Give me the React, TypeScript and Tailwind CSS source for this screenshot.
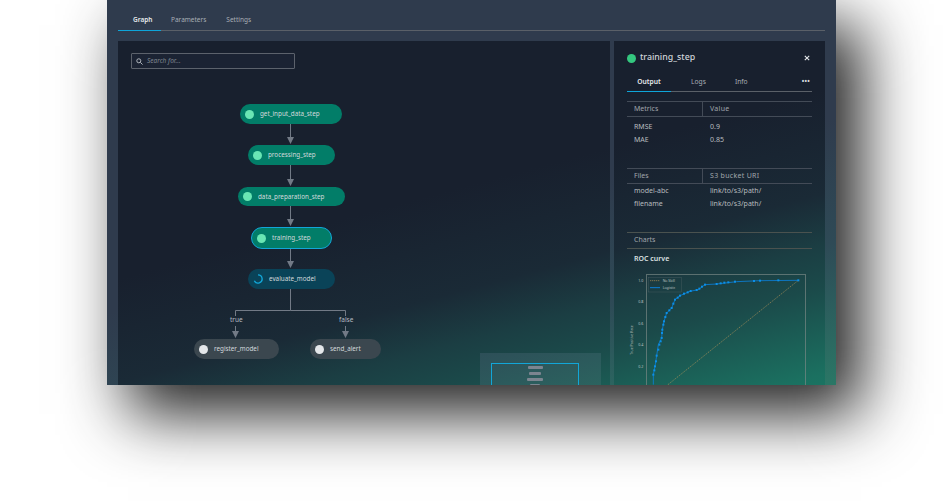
const FONT = "font-['Noto_Sans',sans-serif]"

// both washes are fixed to the page so panels and frame shift to teal along the same line
const FRAME_BG = 'bg-[linear-gradient(165deg,#2f3b4d_330px,#2e4a56_450px,#2c5a5c_500px,#2a7866_590px)] bg-fixed'
const PANEL_BG = 'bg-[linear-gradient(165deg,#18202e_300px,#1a2a36_400px,#1b3e43_450px,#1b4a4a_490px,#1b7060_574px,#1b7462_590px)] bg-fixed'

type Node = { name: string; left: number; top: number; w: number; h: number; kind: 'done' | 'active' | 'running' | 'idle' }

const NODES: Node[] = [
  { name: 'get_input_data_step', left: 122, top: 63, w: 102, h: 20, kind: 'done' },
  { name: 'processing_step', left: 130, top: 104, w: 87, h: 20, kind: 'done' },
  { name: 'data_preparation_step', left: 120, top: 146, w: 107, h: 19, kind: 'done' },
  { name: 'training_step', left: 133, top: 186, w: 81, h: 22, kind: 'active' },
  { name: 'evaluate_model', left: 130, top: 228, w: 87, h: 20, kind: 'running' },
  { name: 'register_model', left: 76, top: 298, w: 85, h: 20, kind: 'idle' },
  { name: 'send_alert', left: 192, top: 298, w: 71, h: 20, kind: 'idle' },
]

const CURVE = '130,495 130,465 135,440 140,408 145,375 155,355 157,330 162,305 170,280 185,265 195,240 210,228 240,215 265,210 285,195 320,193 380,186 450,183 565,182'
const MARKS = '130,465 133,452 135,440 138,425 140,408 145,390 148,375 152,365 155,355 156,340 157,330 160,315 162,305 166,292 170,280 178,272 185,265 190,252 195,240 203,234 210,228 222,222 233,218 242,214 260,211 268,207 276,201 285,195 320,193 332,191 343,189 355,188 375,186 432,184 450,183 505,182 565,182'

function GraphNode({ node }: { node: Node }) {
  const bg =
    node.kind === 'running' ? 'bg-[#0a4358]' : node.kind === 'idle' ? 'bg-[#3b474f]' : 'bg-[#027d68]'
  return (
    <div
      className={`absolute flex items-center rounded-full pl-[5px] ${bg} ${node.kind === 'active' ? 'border border-[#12a6d8]' : ''}`}
      style={{ left: node.left, top: node.top, width: node.w, height: node.h }}
    >
      {node.kind === 'running' ? (
        <svg width="10" height="10" viewBox="0 0 11 11" className="shrink-0">
          <path d="M5.5 1 A4.5 4.5 0 1 1 1.5 7.5" fill="none" stroke="#12a6d8" strokeWidth="1.5" />
        </svg>
      ) : (
        <span className={`size-[9px] shrink-0 rounded-full ${node.kind === 'idle' ? 'bg-[#e4e7ea]' : 'bg-[#69e6b4]'}`} />
      )}
      <span className="ml-[6px] whitespace-nowrap text-[6.3px] text-[#d3d9dc]">{node.name}</span>
    </div>
  )
}

function Edges() {
  return (
    <svg className="absolute left-0 top-0" width="492" height="344" fill="none">
      <g stroke="#727a86" strokeWidth="1">
        <path d="M172.5 83V96M172.5 124V138M172.5 165V178M172.5 208V220M172.5 248V269.5H117.5V275M227.500 269.5V275M172.5 269.5H227.5M117.500 285V290M227.500 285V290" />
      </g>
      <g fill="#727a86">
        <path d="M169 96h7l-3.500 7zM169 138h7l-3.500 7zM169 178h7l-3.500 7zM169 220h7l-3.500 7zM114 290h7l-3.500 7zM224 290h7l-3.500 7z" />
      </g>
    </svg>
  )
}

function TableHead({ a, b }: { a: string; b: string }) {
  return (
    <div className="flex h-4 items-center border-y border-[#434b57] text-[7px] text-[#a0a6ac]">
      <span className="flex h-full w-[76px] items-center border-r border-[#434b57] pl-[7px]">{a}</span>
      <span className="pl-[7px] tracking-[0.3px]">{b}</span>
    </div>
  )
}

function TableRow({ a, b }: { a: string; b: string }) {
  return (
    <div className="flex h-[12.500px] items-center text-[7px] text-[#b7bcbf]">
      <span className="w-[76px] pl-[7px]">{a}</span>
      <span className="pl-[7px]">{b}</span>
    </div>
  )
}

function RocChart() {
  // coordinates follow the source plot at 3x, offset by the chart box
  return (
    <svg width="204" height="125" viewBox="0 0 612 375" fill="none" className="ml-[-13px] mt-[8px] shrink-0">
      <g transform="translate(-12,0)">
      <rect x="109" y="8" width="478" height="400" stroke="#7d8b88" strokeWidth="2" />
      <g transform="translate(0,-157)">
        <polyline points="130,530 565,182" stroke="#c19a5b" strokeWidth="1.800" strokeDasharray="4 3" />
        <polyline points={CURVE} stroke="#0b7fd8" strokeWidth="2.500" strokeLinejoin="round" />
        {MARKS.split(' ').map((p) => {
          const [x, y] = p.split(',')
          return <rect key={p} x={Number(x) - 3} y={Number(y) - 3} width="6" height="6" fill="#0b8fe8" />
        })}
        <g fontSize="11" fill="#b9c2c0" textAnchor="end">
          <text x="100" y="186">1.0</text>
          <text x="100" y="250">0.8</text>
          <text x="100" y="315">0.6</text>
          <text x="100" y="380">0.4</text>
          <text x="100" y="444">0.2</text>
        </g>
        <text x="0" y="0" fontSize="10.500" fill="#a6b1ae" transform="translate(68,405) rotate(-90)">True Positive Rate</text>
        <rect x="116" y="173" width="99" height="44" stroke="#55666a" fill="none" />
        <path d="M120 183H150" stroke="#c19a5b" strokeWidth="1.800" strokeDasharray="4 2" />
        <path d="M120 204H150" stroke="#0b7fd8" strokeWidth="3" />
        <g fontSize="10.500" fill="#b9c2c0">
          <text x="158" y="187">No Skill</text>
          <text x="158" y="208">Logistic</text>
        </g>
      </g>
      </g>
    </svg>
  )
}

export default function App() {
  return (
    <div className={`h-[501px] w-[943px] overflow-hidden bg-white pl-[107px] ${FONT}`}>
      <div className={`relative flex h-[385px] w-[729px] flex-col overflow-hidden shadow-[23px_27px_60px_2px_rgba(0,0,0,0.87)] ${FRAME_BG}`}>
        {/* Tabs */}
        <div className="mx-[11px] mt-[11px] flex h-[20px] w-[707px] shrink-0 border-b border-[#5a6068] text-[6.500px] text-[#a8aeb5]">
          <div className="-mb-px w-[43px] border-b border-[#0ea5d9] pl-[15px] pt-[4px] font-semibold text-[#e6e9eb]">Graph</div>
          <div className="ml-[10px] pt-[4px]">Parameters</div>
          <div className="ml-[20px] pt-[4px]">Settings</div>
        </div>

        <div className="mx-[11px] mt-[10px] flex min-h-0 flex-1">
          {/* Graph canvas */}
          <div className={`relative w-[492px] ${PANEL_BG}`}>
            <div className="absolute left-[13px] top-[12px] flex h-4 w-[164px] items-center rounded-[1px] border border-[#5c626c] bg-[#1b2333] pl-[4px] text-[6.500px] italic text-[#7f8791]">
              <svg width="7" height="7" viewBox="0 0 8 8" fill="none" stroke="#b5bbc2" strokeWidth="1.100">
                <circle cx="3.200" cy="3.200" r="2.300" />
                <path d="M5 5 7.500 7.500" />
              </svg>
              <span className="ml-[4px]">Search for...</span>
            </div>
            <Edges />
            {NODES.map((n) => (
              <GraphNode key={n.name} node={n} />
            ))}
            <span className="absolute left-[112px] top-[274px] text-[6.500px] leading-[10px] text-[#b4bac1]">true</span>
            <span className="absolute left-[221px] top-[274px] text-[6.500px] leading-[10px] text-[#b4bac1]">false</span>

            {/* Minimap */}
            <div className={`absolute left-[362px] top-[312px] h-[40px] w-[121px] ${FRAME_BG}`}>
              <div className="absolute left-[11px] top-[10px] flex h-[40px] w-[88px] flex-col items-center gap-[3px] border border-[#12a6d8] pt-[2px]">
                <span className="h-[3px] w-[15px] rounded-[1px] bg-[#7c8590]" />
                <span className="h-[3px] w-[12px] rounded-[1px] bg-[#7c8590]" />
                <span className="h-[3px] w-[16px] rounded-[1px] bg-[#7c8590]" />
                <span className="h-[3px] w-[10px] rounded-[1px] bg-[#7c8590]" />
              </div>
            </div>
          </div>

          {/* Divider */}
          <div className="w-[4px]" />

          {/* Side panel */}
          <div className={`flex w-[211px] flex-col overflow-hidden px-[13px] ${PANEL_BG}`}>
            <div className="mt-[11px] flex h-[12px] shrink-0 items-center">
              <span className="size-[9px] rounded-full bg-[#34c77f]" />
              <span className="ml-[4px] text-[8.800px] font-medium text-[#cfd4d9]">training_step</span>
              <svg className="ml-auto mr-[2px]" width="6" height="6" viewBox="0 0 6 6" stroke="#e4e7ea" strokeWidth="1.100">
                <path d="M.8.8 5.200 5.200M5.200.8.8 5.200" />
              </svg>
            </div>

            <div className="mt-[13px] flex h-[15px] w-[185px] shrink-0 border-b border-[#5a6068] text-[6.700px] text-[#a8aeb5]">
              <div className="-mb-px flex w-[44px] justify-center border-b border-[#0ea5d9] font-semibold text-[#e6e9eb]">Output</div>
              <div className="ml-[20px]">Logs</div>
              <div className="ml-[29px]">Info</div>
              <div className="ml-auto mr-[2px] font-bold tracking-[0.2px] text-[#d5dadf]">•••</div>
            </div>

            <div className="mt-[9px] shrink-0">
              <TableHead a="Metrics" b="Value" />
              <div className="mt-[4px]">
                <TableRow a="RMSE" b="0.9" />
                <TableRow a="MAE" b="0.85" />
              </div>
            </div>

            <div className="mt-[22px] shrink-0">
              <TableHead a="Files" b="S3 bucket URI" />
              <div className="mt-[1px]">
                <TableRow a="model-abc" b="link/to/s3/path/" />
                <TableRow a="filename" b="link/to/s3/path/" />
              </div>
            </div>

            <div className="mt-[22px] flex h-[17px] shrink-0 items-center border-y border-[#4a524f] pl-[7px] text-[7px] text-[#a0a6ac]">Charts</div>
            <div className="mt-[5px] shrink-0 pl-[7px] text-[7px] font-semibold leading-[10px] text-[#dde1e3]">ROC curve</div>
            <RocChart />
          </div>
        </div>
      </div>
    </div>
  )
}
